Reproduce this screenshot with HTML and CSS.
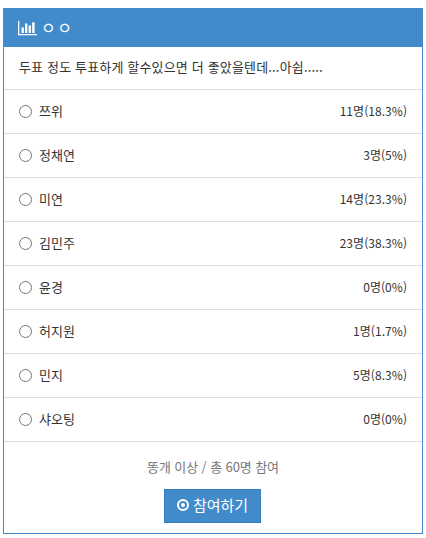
FILE: index.html
```html
<!DOCTYPE html>
<html lang="ko">
<head>
<meta charset="utf-8">
<title>투표</title>
<link rel="stylesheet" href="styles.css">
</head>
<body>
<form class="poll">
  <header class="poll-head">
    <svg class="chart-icon" width="19" height="15" viewBox="0 0 19 15" fill="#fff"><path d="M0 0h1.300v13H19v1.300H0zM3.500 6.500h2.400V12H3.500zM7 2.500h2.300V12H7zM10.600 4.500h2.300V12h-2.300zM14.200 1.300h2.400V12h-2.400z"/></svg>
    <span class="poll-title">ㅇ ㅇ</span>
  </header>
  <p class="question">두표 정도 투표하게 할수있으면 더 좋았을텐데...아쉽.....</p>
  <ul class="options">
    <li><label><input type="radio" name="v"><span class="name">쯔위</span></label><span class="count">11명(18.3%)</span></li>
    <li><label><input type="radio" name="v"><span class="name">정채연</span></label><span class="count">3명(5%)</span></li>
    <li><label><input type="radio" name="v"><span class="name">미연</span></label><span class="count">14명(23.3%)</span></li>
    <li><label><input type="radio" name="v"><span class="name">김민주</span></label><span class="count">23명(38.3%)</span></li>
    <li><label><input type="radio" name="v"><span class="name">윤경</span></label><span class="count">0명(0%)</span></li>
    <li><label><input type="radio" name="v"><span class="name">허지원</span></label><span class="count">1명(1.7%)</span></li>
    <li><label><input type="radio" name="v"><span class="name">민지</span></label><span class="count">5명(8.3%)</span></li>
    <li><label><input type="radio" name="v"><span class="name">샤오팅</span></label><span class="count">0명(0%)</span></li>
  </ul>
  <footer class="poll-foot">
    <p class="summary">똥개 이상 / 총 60명 참여</p>
    <button class="join" type="button">
      <svg width="12" height="12" viewBox="0 0 12 12"><circle cx="6" cy="6" r="5" fill="none" stroke="#fff" stroke-width="2"/><circle cx="6" cy="6" r="2" fill="#fff"/></svg>
      <span>참여하기</span>
    </button>
  </footer>
</form>
</body>
</html>
```
FILE: styles.css
```css
* { box-sizing: border-box; }
body {
  margin: 0;
  padding: 8px 3px;
  background: #fff;
  color: #333;
  font: 13px/20px "Noto Sans CJK KR", sans-serif;
}
p, ul { margin: 0; padding: 0; }
.poll {
  width: 420px;
  height: 526px;
  border: 1px solid #428bca;
}
.poll-head {
  display: flex;
  align-items: center;
  height: 38px;
  padding-left: 14px;
  background: #428bca;
  color: #fff;
}
.poll-title {
  margin-left: 4px;
  padding-bottom: 3px;
  font-size: 16px;
  word-spacing: -3px;
}
.question {
  height: 43px;
  padding: 10px 15px;
  border-bottom: 1px solid #ddd;
  letter-spacing: 0.16px;
  white-space: nowrap;
}
.options { list-style: none; }
.options li {
  display: flex;
  align-items: center;
  justify-content: space-between;
  height: 44px;
  padding: 0 15px;
  border-bottom: 1px solid #ddd;
}
.options label {
  display: flex;
  align-items: center;
}
.options input {
  appearance: none;
  width: 13px;
  height: 13px;
  margin: 0 7px 0 0;
  border: 1px solid #767676;
  border-radius: 50%;
  background: #fff;
}
.name {
  padding-bottom: 1px;
}
.count {
  padding-bottom: 2px;
  font-size: 12px;
  letter-spacing: 0.05px;
}
.poll-foot {
  display: flex;
  flex-direction: column;
  align-items: center;
  padding-top: 15px;
}
.summary {
  color: #777;
  letter-spacing: -0.1px;
}
.join {
  display: flex;
  align-items: center;
  justify-content: center;
  gap: 4px;
  width: 97px;
  height: 34px;
  margin: 12px 1px 0 0;
  padding: 0 0 2px;
  border: 1px solid #357ebd;
  background: #428bca;
  color: #fff;
  font: 15px/20px "Noto Sans CJK KR", sans-serif;
}
```
